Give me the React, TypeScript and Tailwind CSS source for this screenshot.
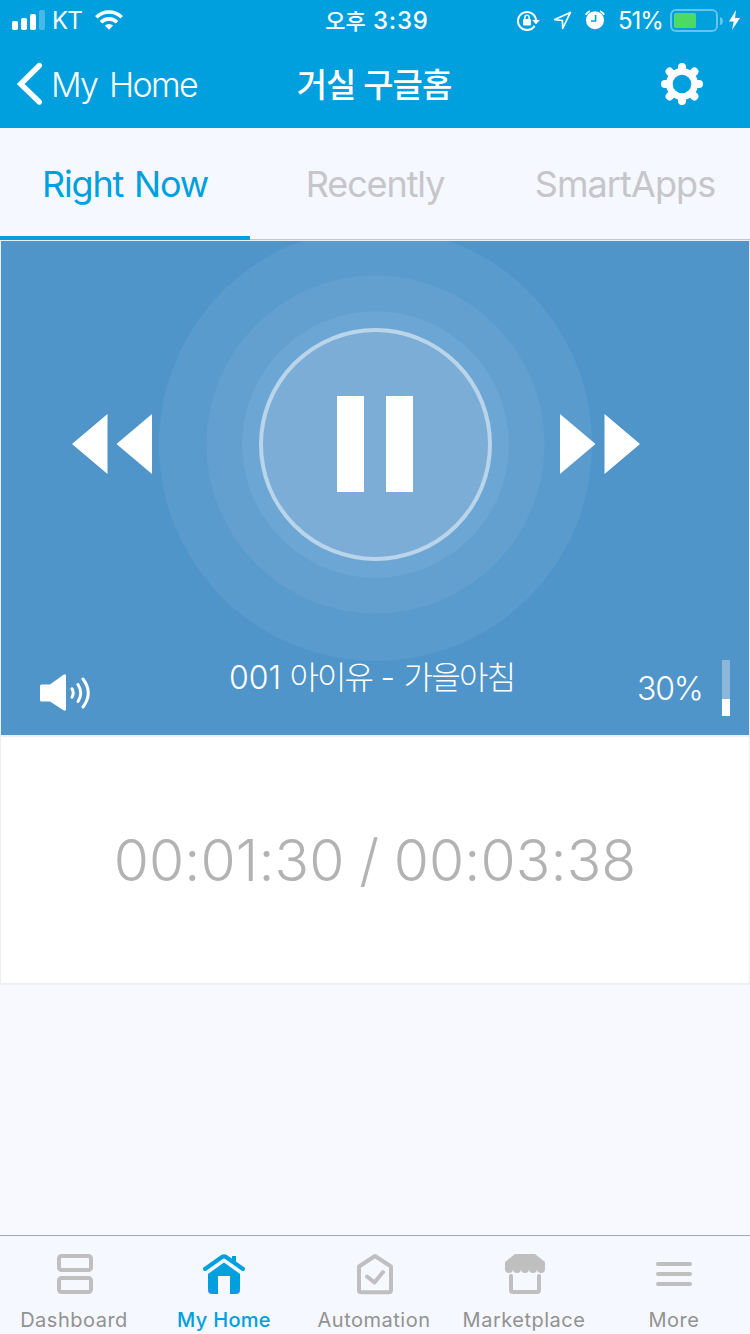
import type { ReactNode } from "react";

function StatusBar() {
  return (
    <div className="flex h-10 items-center">
      <div className="flex w-[250px] items-center">
        <svg className="ml-3" width="33" height="20" viewBox="0 0 33 20" fill="#fff">
          <rect x="0" y="11" width="6" height="9" rx="1.8" />
          <rect x="9" y="8" width="6" height="12" rx="1.8" />
          <rect x="18" y="4" width="6" height="16" rx="1.8" />
          <rect x="27" y="0" width="6" height="20" rx="1.8" opacity=".28" />
        </svg>
        <span className="ml-[7px] w-[33px] whitespace-nowrap pt-0.5 text-[24px] leading-6 tracking-[-1px]">KT</span>
        <svg className="ml-[10px]" width="28" height="20" viewBox="0 0 28 20" fill="none" stroke="#fff" strokeWidth="3.6">
          <path d="M1.3 7.3a18 18 0 0 1 25.4 0" />
          <path d="M6 12.2a11.3 11.3 0 0 1 16 0" />
          <path d="M14 19.8l-4.1-4.2a6 6 0 0 1 8.2 0z" fill="#fff" stroke="none" />
        </svg>
      </div>
      <div className="flex w-[254px] justify-center whitespace-pre pt-0.5 text-[24px] leading-6 font-medium">
        <span className="text-[22px]">오후</span>
        <span className="tracking-[0.8px]"> 3:39</span>
      </div>
      <div className="flex items-center pl-[13px]">
        <svg width="23" height="21" viewBox="0 0 23 21" fill="none" stroke="#fff" strokeWidth="2">
          <path d="M17.6 15.9A9 9 0 1 1 19 10.5" />
          <path d="M15.2 10h7.6l-3.8 4.2z" fill="#fff" stroke="none" />
          <rect x="6" y="9" width="8" height="6.6" rx="1" fill="#fff" stroke="none" />
          <path d="M7.9 9.5V7.3a2.1 2.1 0 0 1 4.2 0v2.2" strokeWidth="1.5" />
        </svg>
        <svg className="ml-[13px]" width="19" height="19" viewBox="0 0 19 19" fill="none" stroke="#fff" strokeWidth="1.7" strokeLinejoin="round">
          <path d="M17.400 1.400L1.700 8.600l7.700.9.300 8z" />
        </svg>
        <svg className="ml-[13px]" width="20" height="20" viewBox="0 0 20 20">
          <circle cx="10" cy="10.2" r="9" fill="#fff" />
          <path d="M.8 4.8A11 11 0 0 1 4.8 1M15.2 1a11 11 0 0 1 4 3.8" fill="none" stroke="#fff" strokeWidth="2" />
          <path d="M10.6 5v6H6" fill="none" stroke="#009fdd" strokeWidth="1.6" />
        </svg>
        <span className="ml-[13px] w-[47px] whitespace-nowrap pt-0.5 text-[24px] leading-6 tracking-[-1px]">51%</span>
        <svg className="ml-[5px]" width="72" height="24" viewBox="0 0 72 24">
          <rect x="1" y="2" width="46" height="21" rx="5" fill="none" stroke="#66c5eb" strokeWidth="2" />
          <rect x="4" y="5" width="22" height="15" rx="1.5" fill="#4cd964" />
          <path d="M50 9q3 1 3 4t-3 4z" fill="#66c5eb" />
          <path d="M66 2L59 13.500h4.700L62 22l8-12h-5z" fill="#fff" />
        </svg>
      </div>
    </div>
  );
}

function NavBar() {
  return (
    <div className="flex h-[88px] items-center">
      <div className="flex w-[250px] items-center">
        <svg className="ml-4" width="28" height="44" viewBox="0 0 28 44" fill="none" stroke="#fff" strokeWidth="5.4" strokeLinecap="round">
          <path d="M23.3 3.500L4.700 22l18.600 18" />
        </svg>
        <span className="ml-[7px] whitespace-nowrap pt-0.5 text-[34px] leading-10 font-light tracking-[-1.7px] [word-spacing:4px]">My Home</span>
      </div>
      <h1 className="w-[248px] whitespace-nowrap pt-0.5 text-center text-[33px] leading-10 font-medium tracking-[-1px]">거실 구글홈</h1>
      <div className="flex flex-1 justify-end pr-[46px]">
        <svg width="44" height="44" viewBox="-22 -22 44 44">
          <g stroke="#fff" strokeWidth="8" strokeLinecap="round">
            <path d="M0-17V17M-17 0H17M-12.4-12.4L12.4 12.4M12.4-12.4L-12.4 12.4" />
          </g>
          <circle r="16" fill="#fff" />
          <circle r="9.3" fill="#009fdd" />
        </svg>
      </div>
    </div>
  );
}

function Tabs() {
  return (
    <nav className="flex h-28 bg-[#f5f8ff] text-[36px] leading-[113px] text-[#c6c6ca]">
      <button className="flex w-[250px] justify-center border-b-4 border-[#009fdd] whitespace-nowrap text-[#009fdd] tracking-[-1.2px] [word-spacing:2px]">Right Now</button>
      <button className="flex w-[250px] justify-center border-b border-[#c4c5cb] whitespace-nowrap tracking-[-1.1px]">Recently</button>
      <button className="flex w-[250px] justify-center border-b border-[#c4c5cb] whitespace-nowrap tracking-[-0.9px]">SmartApps</button>
    </nav>
  );
}

function Player() {
  return (
    <section className="relative mx-px flex h-[494px] flex-col overflow-hidden bg-[#4f95ca]">
      <svg className="absolute left-0 top-0" width="748" height="494" viewBox="0 0 748 494">
        <circle cx="374.5" cy="203.5" r="216.5" fill="#5a9bce" />
        <circle cx="374.5" cy="203.5" r="169" fill="#63a0d0" />
        <circle cx="374.5" cy="203.5" r="133.3" fill="#6ca6d4" />
      </svg>
      <div className="relative flex h-[407px] items-center">
        <button className="ml-[71px] pb-px">
          <svg width="80" height="60" viewBox="0 0 80 60" fill="#fff">
            <path d="M0 30L35.500 0v60zM44.500 30L80 0v60z" />
          </svg>
        </button>
        <button className="ml-[107px] flex size-[233px] items-center justify-center gap-[22px] rounded-full border-4 border-[#bad5ea] bg-[#7cadd7] pr-px pb-px">
          <span className="h-24 w-[27px] bg-white" />
          <span className="h-24 w-[27px] bg-white" />
        </button>
        <button className="ml-[68px] pb-px">
          <svg width="80" height="60" viewBox="0 0 80 60" fill="#fff">
            <path d="M35.500 30L0 0v60zM80 30L44.500 0v60z" />
          </svg>
        </button>
      </div>
      <div className="relative flex flex-1 text-white">
        <svg className="ml-[38px] mt-[26px]" width="53" height="38" viewBox="0 0 53 38">
          <path d="M1 12q0-1.500 1.500-1.500H11L24.500.8Q27-.5 27 2v33q0 2.500-2.500 1.200L11 27.500H2.500Q1 27.500 1 26z" fill="#fff" />
          <g fill="none" stroke="#fff" strokeWidth="3" strokeLinecap="round">
            <path d="M33 14.800q2.500 4.200 0 8.400M39 10.500q5.500 8.500 0 17M44 5q10.500 14 0 28" />
          </g>
        </svg>
        <p className="ml-[137px] mt-[10px] w-[291px] whitespace-nowrap text-[32px] leading-10 font-light [word-spacing:-0.6px]">
          001 <span className="tracking-[-1.9px]">아이유</span> - <span className="tracking-[-1.7px]">가을아침</span>
        </p>
        <span className="ml-[117px] mt-[21px] w-[67px] whitespace-nowrap text-[32px] leading-10 font-light tracking-[-1.2px]">30%</span>
        <div className="ml-[18px] mt-[12px] flex h-14 w-2 flex-col bg-[#8db7da] pt-[39px]">
          <span className="flex-1 bg-white" />
        </div>
      </div>
    </section>
  );
}

function TabItem({ label, active, children }: { label: string; active?: boolean; children: ReactNode }) {
  return (
    <button className={active ? "flex w-[150px] flex-col items-center text-[#009fdd]" : "flex w-[150px] flex-col items-center text-[#929292]"}>
      <svg className="mt-4" width="44" height="44" viewBox="0 0 44 44">{children}</svg>
      <span className={active ? "mt-3 whitespace-nowrap text-[20px] leading-6 font-medium tracking-[0.3px]" : "mt-3 whitespace-nowrap text-[20px] leading-6 tracking-[0.5px]"}>{label}</span>
    </button>
  );
}

function BottomBar() {
  return (
    <footer className="-ml-px flex h-[99px] w-[751px] border-t border-[#a6a8ae] bg-[#f5f8ff]">
      <TabItem label="Dashboard">
        <g fill="none" stroke="#bfbfbf" strokeWidth="4">
          <rect x="7" y="4" width="32" height="14" rx="2.500" />
          <rect x="7" y="26" width="32" height="14" rx="2.500" />
        </g>
      </TabItem>
      <TabItem label="My Home" active>
        <path d="M3 17.500L20 5.500q2-1.300 4 0l17 12" fill="none" stroke="#009fdd" strokeWidth="4" strokeLinecap="round" transform="translate(0 -.5)" />
        <path d="M30 4h4v8l-4-3z" fill="#009fdd" />
        <path d="M6 22L22 10.500 38 22v16q0 4-4 4h-6V24H16v18h-6q-4 0-4-4z" fill="#009fdd" />
      </TabItem>
      <TabItem label="Automation">
        <g fill="none" stroke="#bfbfbf" strokeWidth="4" strokeLinecap="round" strokeLinejoin="round">
          <path d="M23 4L39 14.500V38q0 2.300-2.300 2.300H9.300Q7 40.300 7 38V14.500z" />
          <path d="M15 24.500l7.500 6L31 20" />
        </g>
      </TabItem>
      <TabItem label="Marketplace">
        <path d="M13 2h20l10 8v7a4 4 0 0 1-8 0 4 4 0 0 1-8 0 4 4 0 0 1-8 0 4 4 0 0 1-8 0 4 4 0 0 1-8 0v-7z" fill="#bfbfbf" />
        <path d="M9 24v14q0 2 2 2h24q2 0 2-2V24" fill="none" stroke="#bfbfbf" strokeWidth="4" strokeLinecap="round" />
      </TabItem>
      <TabItem label="More">
        <path d="M6 12h32M6 22h32M6 32h32" stroke="#bfbfbf" strokeWidth="4" strokeLinecap="round" />
      </TabItem>
    </footer>
  );
}

export default function App() {
  return (
    <div className="flex h-[1334px] w-[750px] flex-col overflow-hidden bg-[#f7f9ff] font-['Inter','Noto_Sans_CJK_KR',sans-serif]">
      <header className="h-32 bg-[#009fdd] text-white">
        <StatusBar />
        <NavBar />
      </header>
      <Tabs />
      <main className="flex-1">
        <div className="h-[745px] bg-[#ebeef3] pt-px">
          <Player />
          <div className="mx-px mt-0.5 flex h-[246px] items-center justify-center bg-white pt-0.5 text-[57px] font-light whitespace-nowrap text-[#b3b3b3] tracking-[0.1px] [word-spacing:-1.5px]">
            00:01:30 / 00:03:38
          </div>
        </div>
      </main>
      <BottomBar />
    </div>
  );
}
